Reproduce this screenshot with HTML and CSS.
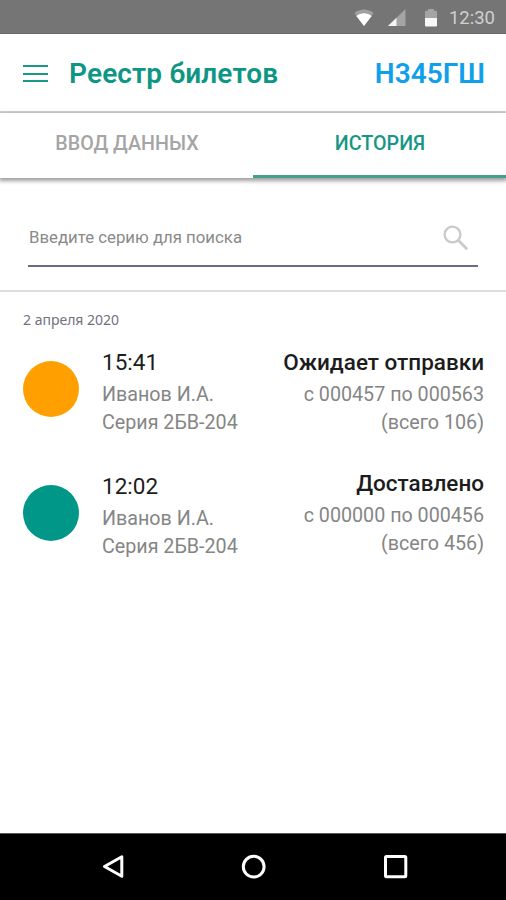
FILE: index.html
```html
<!DOCTYPE html>
<html lang="ru">
<head>
    <meta charset="UTF-8">
    <meta name="viewport" content="width=device-width, initial-scale=1.0">
    <title>Реестр билетов</title>
    <link rel="stylesheet" href="styles.css">
</head>
<body>
    <div class="status-bar">
        <svg class="wifi" width="20" height="18" viewBox="0 0 20 18">
            <path d="M0.500 4.200C5.500-.8 14.500-.8 19.500 4.200L10 17z" fill="#a0a0a0"/>
            <path d="M2.300 7C7 3.300 13 3.300 17.700 7L10 17z" fill="#fff"/>
        </svg>
        <svg class="signal" width="18" height="18" viewBox="0 0 18 18">
            <path d="M17.500 0v17H0z" fill="#a4a4a4"/>
            <path d="M8.500 8.700V17H0z" fill="#f4f4f4"/>
        </svg>
        <svg class="battery" width="12" height="18" viewBox="0 0 12 18">
            <path d="M0 9V3q0-1.200 1.200-1.200H3V0h6v1.800h1.800Q12 1.800 12 3v6z" fill="#a4a4a4"/>
            <path d="M0 9h12v7.300q0 1.200-1.200 1.200H1.200Q0 17.500 0 16.300z" fill="#f7f7f7"/>
        </svg>
        <span class="clock">12:30</span>
    </div>
    <header class="app-bar">
        <div class="menu">
            <span></span>
            <span></span>
            <span></span>
        </div>
        <h1>Реестр билетов</h1>
        <div class="plate">Н345ГШ</div>
    </header>
    <nav class="tabs">
        <div class="tab">ВВОД ДАННЫХ</div>
        <div class="tab active">ИСТОРИЯ</div>
    </nav>
    <section class="search">
        <div class="search-field">
            <span class="hint">Введите серию для поиска</span>
            <svg width="26" height="26" viewBox="0 0 26 26" fill="none" stroke="#cacaca">
                <circle cx="9.500" cy="9.500" r="7.900" stroke-width="2.400"/>
                <path d="M15.500 15.500l8.700 8.700" stroke-width="2.800"/>
            </svg>
        </div>
    </section>
    <main class="history">
        <div class="date">2 апреля 2020</div>
        <div class="record">
            <div class="dot waiting"></div>
            <div class="info">
                <div class="time">15:41</div>
                <div class="name">Иванов И.А.</div>
                <div class="series">Серия 2БВ-204</div>
            </div>
            <div class="state">
                <div class="title">Ожидает отправки</div>
                <div class="range">с 000457 по 000563</div>
                <div class="total">(всего 106)</div>
            </div>
        </div>
        <div class="record">
            <div class="dot done"></div>
            <div class="info">
                <div class="time">12:02</div>
                <div class="name">Иванов И.А.</div>
                <div class="series">Серия 2БВ-204</div>
            </div>
            <div class="state raised">
                <div class="title">Доставлено</div>
                <div class="range">с 000000 по 000456</div>
                <div class="total">(всего 456)</div>
            </div>
        </div>
    </main>
    <footer class="nav-bar">
        <svg width="24" height="26" viewBox="0 0 24 26">
            <path d="M3.500 12.500L20.800 2.700v19.600z"/>
        </svg>
        <svg width="26" height="26" viewBox="0 0 26 26">
            <circle cx="12.700" cy="12.700" r="10.400"/>
        </svg>
        <svg width="26" height="26" viewBox="0 0 26 26">
            <rect x="2.500" y="2.500" width="20.300" height="20.300" rx="1"/>
        </svg>
    </footer>
</body>
</html>
```
FILE: styles.css
```css
* {
    box-sizing: border-box;
}
body {
    margin: 0;
    height: 900px;
    display: flex;
    flex-direction: column;
    background: #fff;
    font-family: Roboto, "Liberation Sans", sans-serif;
    white-space: nowrap;
    overflow: hidden;
}
.status-bar {
    height: 34px;
    display: flex;
    align-items: center;
    justify-content: flex-end;
    padding: 2px 11px 0 0;
    background: #757575;
    border-bottom: 1px solid #666;
}
.wifi {
    margin-right: 14px;
}
.signal {
    margin-right: 19px;
}
.battery {
    margin-right: 12px;
}
.clock {
    color: #d0d0d0;
    font-size: 18.5px;
    line-height: 22px;
}
.app-bar {
    height: 79px;
    display: flex;
    align-items: center;
    padding: 2px 21px 0 23px;
    border-bottom: 2px solid #d5d5d5;
}
.menu {
    width: 25px;
    height: 17px;
    display: flex;
    flex-direction: column;
    justify-content: space-between;
    margin-right: 21px;
}
.menu span {
    height: 2px;
    background: #1b9786;
}
h1 {
    margin: 0;
    color: #0e9685;
    font-size: 28px;
    font-weight: 600;
    line-height: 34px;
    letter-spacing: 0.15px;
}
.plate {
    margin-left: auto;
    color: #10a0ea;
    font-size: 28px;
    font-weight: 600;
    line-height: 34px;
}
.tabs {
    height: 65px;
    display: flex;
    box-shadow: 0 2px 4px 1px rgba(0, 0, 0, 0.38);
    position: relative;
}
.tab {
    flex: 1;
    padding: 19px 0 0 1px;
    text-align: center;
    color: #a5a5a5;
    font-size: 19.7px;
    font-weight: 500;
    line-height: 24px;
}
.tab.active {
    color: #189684;
    border-bottom: 3px solid #459f8d;
}
.search {
    height: 114px;
    padding: 32px 28px 0;
    border-bottom: 2px solid #dedede;
}
.search-field {
    height: 57px;
    display: flex;
    align-items: center;
    justify-content: space-between;
    padding: 0 9px 0 1px;
    border-bottom: 2px solid #6e697f;
}
.search-field svg {
    margin-top: 1px;
}
.hint {
    color: #8a8a8a;
    font-size: 16.8px;
    padding-bottom: 2px;
}
.history {
    flex: 1;
    padding: 18px 22px 0 23px;
}
.date {
    color: #72727c;
    font-family: "Noto Sans", sans-serif;
    font-size: 14px;
    line-height: 20px;
    margin-bottom: 18px;
}
.record {
    height: 124px;
    display: flex;
}
.dot {
    width: 56px;
    height: 56px;
    margin: 12.5px 23px 0 0;
    border-radius: 50%;
}
.waiting {
    background: #ffa000;
}
.done {
    background: #009688;
}
.state {
    margin-left: auto;
    text-align: right;
}
.raised {
    margin-top: -3px;
}
.time,
.title {
    height: 33px;
    color: #1c1c1c;
    font-size: 22.5px;
    line-height: 28px;
}
.title {
    font-weight: 500;
}
.name,
.series,
.range,
.total {
    color: #858585;
    font-size: 19.7px;
    line-height: 28px;
}
.nav-bar {
    height: 67px;
    display: flex;
    align-items: center;
    justify-content: space-between;
    padding: 0 97px 0 101px;
    background: #000;
    border-top: 1px solid #555;
}
.nav-bar svg {
    fill: none;
    stroke: #fff;
    stroke-width: 3;
    stroke-linejoin: round;
}
```
